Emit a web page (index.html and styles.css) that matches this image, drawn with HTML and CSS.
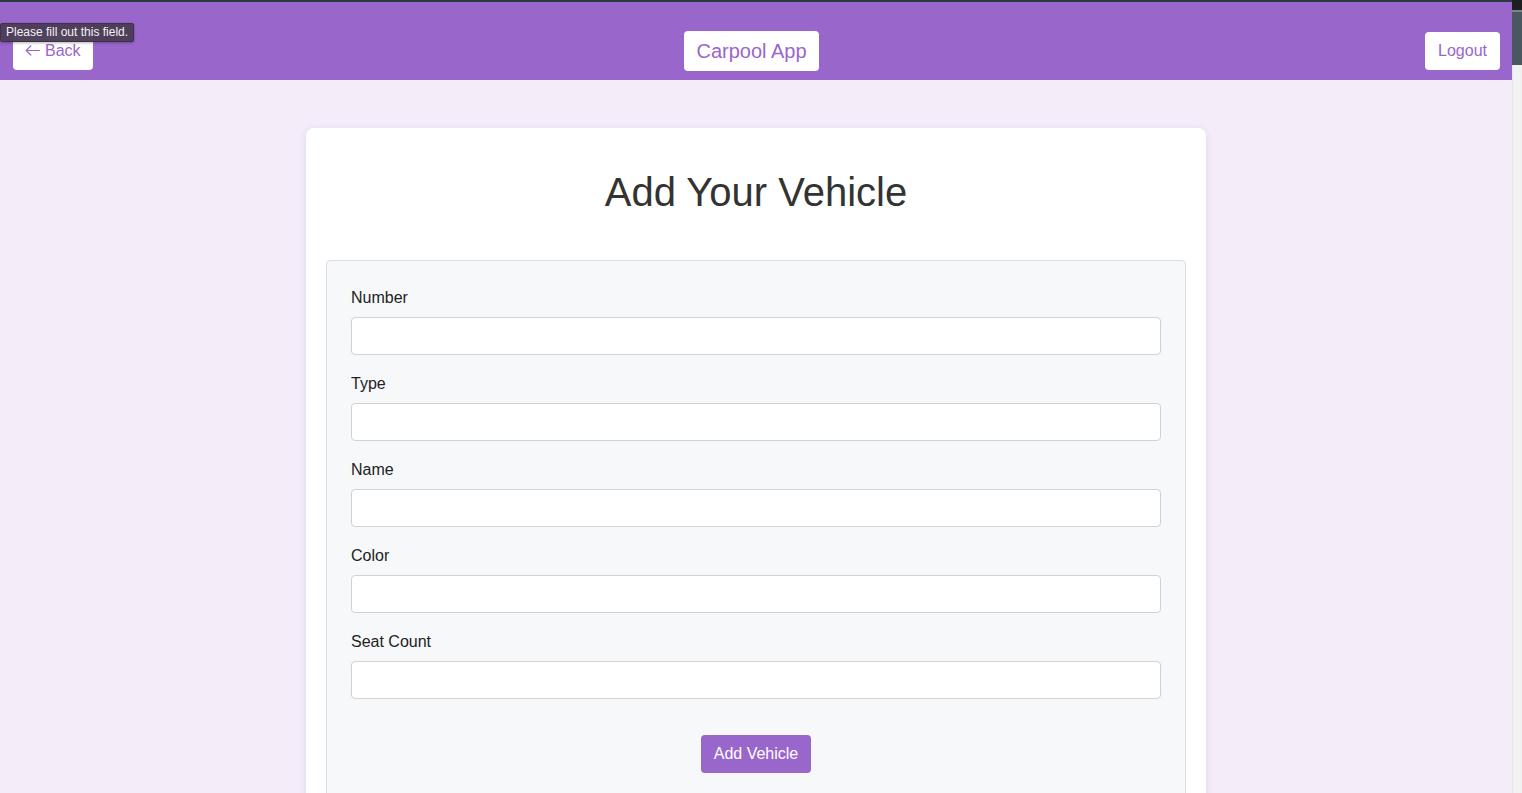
FILE: index.html
```html
<!DOCTYPE html>
<html lang="en">
<head>
<meta charset="utf-8">
<title>Carpool App - Add Vehicle</title>
<link rel="stylesheet" href="styles.css">
</head>
<body>
<div class="page">
  <header class="topbar">
    <button class="nav-btn back-btn"><svg class="arrow" width="15" height="11" viewBox="0 0 15 11"><path d="M14.5 5.5H1.2M5.8 1L1.2 5.5 5.8 10" fill="none" stroke="#9966cc" stroke-width="1.2" stroke-linecap="round" stroke-linejoin="round"/></svg><span>Back</span></button>
    <button class="nav-btn brand">Carpool App</button>
    <button class="nav-btn">Logout</button>
  </header>
  <div class="tooltip">Please fill out this field.</div>
  <main class="content">
    <section class="card">
      <h1 class="title">Add Your Vehicle</h1>
      <form class="vehicle-form">
        <div class="field">
          <label class="field-label">Number</label>
          <input class="field-input" type="text" required>
        </div>
        <div class="field">
          <label class="field-label">Type</label>
          <input class="field-input" type="text" required>
        </div>
        <div class="field">
          <label class="field-label">Name</label>
          <input class="field-input" type="text" required>
        </div>
        <div class="field">
          <label class="field-label">Color</label>
          <input class="field-input" type="text" required>
        </div>
        <div class="field">
          <label class="field-label">Seat Count</label>
          <input class="field-input" type="text" required>
        </div>
        <div class="actions">
          <button type="button" class="submit-btn">Add Vehicle</button>
        </div>
      </form>
    </section>
  </main>
</div>
<div class="scrollbar">
  <div class="sb-top"></div>
  <div class="sb-line"></div>
  <div class="sb-thumb"></div>
  <div class="sb-track"></div>
</div>
</body>
</html>
```

FILE: styles.css
```css
* { box-sizing: border-box; }

html, body {
  margin: 0;
  padding: 0;
  height: 793px;
  overflow: hidden;
}

body {
  display: flex;
  font-family: "Liberation Sans", Arial, sans-serif;
  background: #f4ecf9;
  color: #222;
}

.page {
  position: relative;
  flex: 1;
  min-width: 0;
  background: #f4ecf9;
}

.topbar {
  height: 80px;
  background: #9966cc;
  border-top: 2px solid #2c3a43;
  display: flex;
  align-items: center;
  justify-content: space-between;
  padding: 20px 12px 0 13px;
}

.nav-btn {
  height: 38px;
  padding: 0 13px;
  background: #fff;
  color: #9966cc;
  border: none;
  border-radius: 4px;
  font-family: "Liberation Sans", Arial, sans-serif;
  font-size: 16px;
  line-height: 38px;
}

.back-btn {
  width: 80px;
  padding: 0 0 0 12px;
  display: flex;
  align-items: center;
  gap: 5px;
}

.arrow {
  flex: none;
  margin-top: -1px;
}

.brand {
  height: 40px;
  line-height: 40px;
  font-size: 20px;
  padding: 0 12px;
  margin-right: 15px;
}

.tooltip {
  position: absolute;
  left: 0;
  top: 23px;
  width: 134px;
  height: 19px;
  background: rgba(76, 60, 86, 0.96);
  border: 1px solid #3d3145;
  border-radius: 2px;
  color: #f2f2f2;
  font-family: "Liberation Sans", Arial, sans-serif;
  font-size: 12px;
  line-height: 17px;
  padding-left: 5px;
  white-space: nowrap;
  box-shadow: 0 1px 3px rgba(0,0,0,0.3);
}

.content {
  display: flex;
  justify-content: center;
  padding-top: 48px;
}

.card {
  width: 900px;
  background: #fff;
  border-radius: 8px;
  box-shadow: 0 2px 8px rgba(90, 60, 120, 0.12);
  padding: 20px 20px 30px;
}

.title {
  margin: 21px 0 45px;
  text-align: center;
  font-size: 40px;
  font-weight: normal;
  color: #333;
  line-height: 46px;
}

.vehicle-form {
  background: #f7f8fa;
  border: 1px solid #dcdee2;
  border-radius: 4px;
  padding: 28px 24px 30px;
}

.field {
  display: flex;
  flex-direction: column;
  margin-bottom: 20px;
}

.field-label {
  font-size: 16px;
  line-height: 18px;
  color: #222;
  margin-bottom: 10px;
}

.field-input {
  height: 38px;
  background: #fff;
  border: 1px solid #cfd2d6;
  border-radius: 4px;
  font-size: 16px;
  padding: 0 10px;
}

.actions {
  display: flex;
  justify-content: center;
  padding-top: 16px;
}

.submit-btn {
  height: 38px;
  padding: 0 13px;
  background: #9966cc;
  color: #fff;
  border: none;
  border-radius: 4px;
  font-family: "Liberation Sans", Arial, sans-serif;
  font-size: 16px;
}

.scrollbar {
  width: 10px;
  flex: none;
  display: flex;
  flex-direction: column;
  background: #f1f1f1;
}

.sb-top { height: 10px; background: #1b1f21; }
.sb-line { height: 2px; background: #7d8387; }
.sb-thumb { height: 53px; background: #4a5660; }
.sb-track { flex: 1; background: #f1f1f1; border-left: 1px solid #e6e6e6; }
```
